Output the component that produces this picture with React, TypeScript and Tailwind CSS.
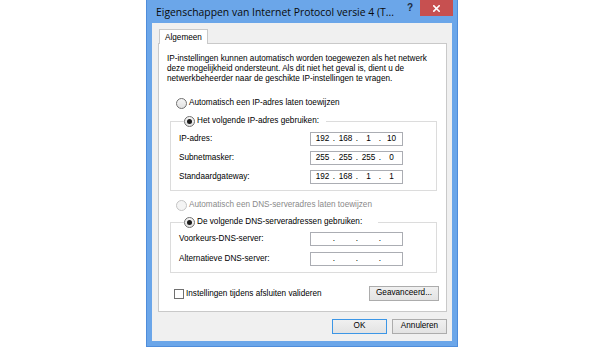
import React from "react";

function Radio({ checked, disabled }: { checked?: boolean; disabled?: boolean }) {
  return (
    <span
      className={
        disabled
          ? "w-[11px] h-[11px] rounded-full border border-[#c4c4c4] bg-[#f4f4f4] flex items-center justify-center shrink-0"
          : "w-[11px] h-[11px] rounded-full border border-[#707070] bg-gradient-to-b from-[#f6f6f6] to-[#e2e2e2] flex items-center justify-center shrink-0"
      }
    >
      {checked ? <span className="w-[5px] h-[5px] rounded-full bg-[#1c1c1c]" /> : null}
    </span>
  );
}

function IpBox({ v }: { v?: string[] }) {
  const vals = v ?? ["", "", "", ""];
  return (
    <div className="w-[93px] h-[14px] border border-[#abadb3] bg-white flex items-center pl-[3px] leading-none">
      <span className="w-[17px] text-center">{vals[0]}</span>
      <span className="w-[6px] text-center">.</span>
      <span className="w-[17px] text-center">{vals[1]}</span>
      <span className="w-[6px] text-center">.</span>
      <span className="w-[17px] text-center">{vals[2]}</span>
      <span className="w-[6px] text-center">.</span>
      <span className="w-[17px] text-center">{vals[3]}</span>
    </div>
  );
}

function Row({ label, v }: { label: string; v?: string[] }) {
  return (
    <div className="flex items-center h-[14px]">
      <span className="w-[131px] whitespace-nowrap">{label}</span>
      <IpBox v={v} />
    </div>
  );
}

export default function App() {
  return (
    <div className="w-[608px] h-[347px] bg-white flex font-['Liberation_Sans',Arial,sans-serif] text-[8.2px] leading-[10px] text-black overflow-hidden">
      <div className="ml-[146px] w-[312px] h-[347px] bg-[#6ba6e9] border border-t-0 border-[#4f8ddb] flex flex-col px-[5px] pb-[5px]">
        {/* title bar */}
        <div className="h-[23px] flex items-start shrink-0">
          <div className="flex-1 h-[23px] flex items-center pl-[4px] pt-[1px] font-['Open_Sans','Segoe_UI',sans-serif] text-[10.4px] leading-none text-[#0a0a0a] whitespace-nowrap">
            Eigenschappen van Internet Protocol versie 4 (T...
          </div>
          <div className="w-[12px] mr-[4px] h-[16px] flex items-center justify-center font-['Liberation_Sans',sans-serif] font-bold text-[10px] text-[#1d2c40] leading-none">
            ?
          </div>
          <div className="w-[33px] h-[16px] -mr-[1px] bg-[#c75050] flex items-center justify-center">
            <svg width="7" height="7" viewBox="0 0 7 7">
              <path d="M0.8 0.8 L6.2 6.2 M6.2 0.8 L0.8 6.2" stroke="#ffffff" strokeWidth="1.6" strokeLinecap="square" />
            </svg>
          </div>
        </div>

        {/* client */}
        <div className="flex-1 bg-[#f0f0f0] flex flex-col pl-[6px] pr-[5px] pt-[6px] pb-[7px]">
          {/* tab strip */}
          <div className="flex h-[14px] pl-[1px]">
            <div className="h-[15px] px-[5px] bg-white border border-b-0 border-[#c9c9c9] flex items-center relative z-10 pt-[1px]">
              Algemeen
            </div>
          </div>
          {/* panel */}
          <div className="h-[269px] bg-white border border-[#c9c9c9] flex flex-col pt-[10px]">
            <p className="pl-[8px] whitespace-nowrap leading-[10px]">
              IP-instellingen kunnen automatisch worden toegewezen als het netwerk
              <br />
              deze mogelijkheid ondersteunt. Als dit niet het geval is, dient u de
              <br />
              netwerkbeheerder naar de geschikte IP-instellingen te vragen.
            </p>

            <div className="mt-[13px] h-[12px] ml-[17px] flex items-center gap-[2px] whitespace-nowrap">
              <Radio />
              <span>Automatisch een IP-adres laten toewijzen</span>
            </div>

            <fieldset className="mt-[6px] ml-[11px] mr-[9px] border border-[#dcdcdc] pl-[8px] pt-[5px] pb-[6px] flex flex-col gap-[5px]">
              <legend className="ml-[5px] w-[142px] h-[12px] flex items-center gap-[2px] whitespace-nowrap">
                <Radio checked />
                <span>Het volgende IP-adres gebruiken:</span>
              </legend>
              <Row label="IP-adres:" v={["192", "168", "1", "10"]} />
              <Row label="Subnetmasker:" v={["255", "255", "255", "0"]} />
              <Row label="Standaardgateway:" v={["192", "168", "1", "1"]} />
            </fieldset>

            <div className="mt-[8px] h-[12px] ml-[17px] flex items-center gap-[2px] whitespace-nowrap text-[#8a8a8a]">
              <Radio disabled />
              <span>Automatisch een DNS-serveradres laten toewijzen</span>
            </div>

            <fieldset className="mt-[5px] ml-[11px] mr-[9px] border border-[#dcdcdc] pl-[8px] pt-[4px] pb-[6px] flex flex-col gap-[6px]">
              <legend className="ml-[5px] w-[194px] h-[12px] flex items-center gap-[2px] whitespace-nowrap">
                <Radio checked />
                <span>De volgende DNS-serveradressen gebruiken:</span>
              </legend>
              <Row label="Voorkeurs-DNS-server:" />
              <Row label="Alternatieve DNS-server:" />
            </fieldset>

            <div className="mt-[13px] flex items-center justify-between pl-[15px] pr-[7px]">
              <div className="flex items-center gap-[2px] whitespace-nowrap">
                <span className="w-[10px] h-[10px] border border-[#707070] bg-white shrink-0" />
                <span>Instellingen tijdens afsluiten valideren</span>
              </div>
              <button className="w-[70px] h-[15px] border border-[#acacac] bg-gradient-to-b from-[#f0f0f0] to-[#e3e3e3] flex items-center justify-center leading-none">
                Geavanceerd...
              </button>
            </div>
          </div>

          {/* dialog buttons */}
          <div className="mt-[7px] flex justify-end gap-[5px]">
            <button className="w-[55px] h-[15px] border border-[#3c96e6] bg-gradient-to-b from-[#f0f0f0] to-[#e3e3e3] flex items-center justify-center leading-none">
              OK
            </button>
            <button className="w-[55px] h-[15px] border border-[#acacac] bg-gradient-to-b from-[#f0f0f0] to-[#e3e3e3] flex items-center justify-center leading-none">
              Annuleren
            </button>
          </div>
        </div>
      </div>
    </div>
  );
}
